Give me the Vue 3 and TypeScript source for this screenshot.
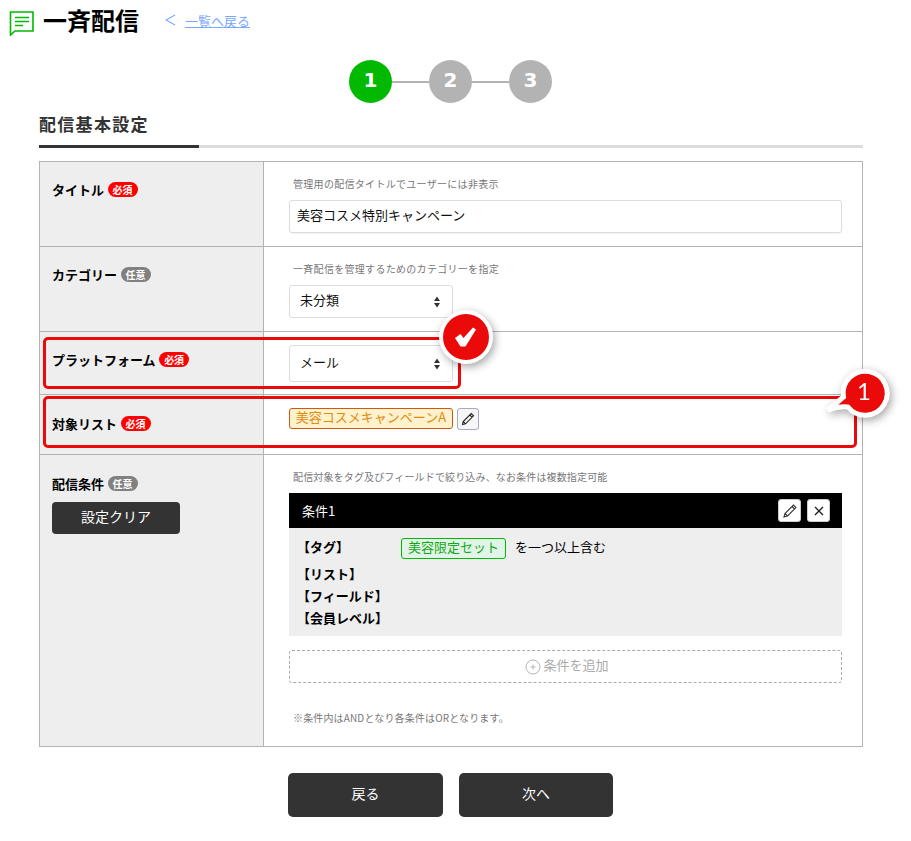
<script setup lang="ts">
const steps = [1, 2, 3]
</script>

<template>
  <div class="page">
    <header class="head">
      <svg class="head-icon" width="26" height="26" viewBox="0 0 26 26" fill="none" stroke="#00b900">
        <path d="M1.5 2h22.5v19H6l-4.500 4z" stroke-width="1.600" fill="#fff" />
        <path d="M6 7.500h14M6 11.500h14M6 15.500h8" stroke-width="1.500" />
      </svg>
      <h1>一斉配信</h1>
      <svg class="chev" width="11" height="12" viewBox="0 0 11 12" fill="none" stroke="#7aa7ff" stroke-width="1.100">
        <path d="M10 1 1 6l9 5" />
      </svg>
      <a class="back">一覧へ戻る</a>
    </header>

    <div class="steps">
      <template v-for="s in steps" :key="s">
        <span v-if="s > 1" class="step-line"></span>
        <span class="step" :class="{ on: s === 1 }">{{ s }}</span>
      </template>
    </div>

    <h2 class="section">配信基本設定</h2>

    <div class="form">
      <div class="row r1">
        <div class="lab"><b>タイトル</b><i class="req">必須</i></div>
        <div class="val">
          <p class="hint">管理用の配信タイトルでユーザーには非表示</p>
          <div class="input">美容コスメ特別キャンペーン</div>
        </div>
      </div>
      <div class="row r2">
        <div class="lab"><b>カテゴリー</b><i class="opt">任意</i></div>
        <div class="val">
          <p class="hint">一斉配信を管理するためのカテゴリーを指定</p>
          <div class="select">未分類
            <svg class="updown" width="6" height="12" viewBox="0 0 6 12" fill="#333"><path d="M3 0.500 6 5H0zM3 11.500 0 7h6z" /></svg>
          </div>
        </div>
      </div>
      <div class="row r3">
        <div class="lab"><b>プラットフォーム</b><i class="req">必須</i></div>
        <div class="val">
          <div class="select tall">メール
            <svg class="updown" width="6" height="12" viewBox="0 0 6 12" fill="#333"><path d="M3 0.500 6 5H0zM3 11.500 0 7h6z" /></svg>
          </div>
        </div>
      </div>
      <div class="row r4">
        <div class="lab"><b>対象リスト</b><i class="req">必須</i></div>
        <div class="val list-val">
          <span class="list-tag">美容コスメキャンペーンA</span>
          <button class="edit">
            <svg width="14" height="14" viewBox="0 0 14 14" fill="none" stroke="#222" stroke-width="1.100">
              <path d="M1.500 12.500l.7-3L10.200 1.500l2.300 2.300-8 8zM8.800 3l2.200 2.200M2.200 9.500l2.300 2.300" />
            </svg>
          </button>
        </div>
      </div>
      <div class="row r5">
        <div class="lab">
          <div><b>配信条件</b><i class="opt">任意</i></div>
          <button class="clear">設定クリア</button>
        </div>
        <div class="val">
          <p class="hint tight">配信対象をタグ及びフィールドで絞り込み、なお条件は複数指定可能</p>
          <div class="cond">
            <div class="cond-head">
              <span>条件1</span>
              <div class="cond-tools">
                <button class="tool">
                  <svg width="16" height="16" viewBox="0 0 16 16" fill="none" stroke="#333" stroke-width="1.100">
                    <path d="M2 14l1-3.500L11.500 2 14 4.500 5.500 13zM10 3.500 12.500 6M3 10.500l2.500 2.500" />
                  </svg>
                </button>
                <button class="tool">
                  <svg width="10" height="10" viewBox="0 0 10 10" stroke="#222" stroke-width="1.400">
                    <path d="M1 1l8 8M9 1l-8 8" />
                  </svg>
                </button>
              </div>
            </div>
            <div class="cond-body">
              <div class="cond-line first">
                <b class="cond-key">【タグ】</b>
                <span class="green-tag">美容限定セット</span>
                <span class="cond-text">を一つ以上含む</span>
              </div>
              <div class="cond-line"><b class="cond-key">【リスト】</b></div>
              <div class="cond-line"><b class="cond-key">【フィールド】</b></div>
              <div class="cond-line"><b class="cond-key">【会員レベル】</b></div>
            </div>
          </div>
          <div class="add">
            <svg class="add-icon" width="16" height="16" viewBox="0 0 16 16" fill="none" stroke="#b5b5b5">
              <circle cx="8" cy="8" r="7" />
              <path d="M8 5.500v5M5.500 8h5" />
            </svg>
            <span>条件を追加</span>
          </div>
          <p class="note">※条件内はANDとなり各条件はORとなります。</p>
        </div>
      </div>
    </div>

    <div class="actions">
      <button class="act">戻る</button>
      <button class="act second">次へ</button>
    </div>

    <div class="mark box1"></div>
    <div class="mark box2"></div>

    <svg class="badge check" width="70" height="70" viewBox="0 0 70 70">
      <circle cx="35" cy="35" r="25" fill="#ea0a0a" stroke="#fff" stroke-width="4" />
      <path d="M24 36 29.500 32l3 4L42 25.500l3 2L34.500 44.500h-5z" fill="#fff" />
    </svg>
    <svg class="badge pin" width="90" height="74" viewBox="0 0 90 74">
      <path d="M17 47 32.500 34A22 22 0 1 1 37 44Q28 43 17 47z" fill="#ea0a0a" stroke="#fff" stroke-width="5" />
      <text x="53" y="37" text-anchor="middle" class="pin-num">1</text>
    </svg>
  </div>
</template>

<style scoped>
.page {
  position: relative;
  width: 911px;
  height: 841px;
  box-sizing: border-box;
  padding: 0 48px 0 39px;
  background: #fff;
  color: #111;
  font-family: "Noto Sans CJK JP", "Liberation Sans", sans-serif;
  font-size: 13px;
  overflow: hidden;
}
button { font-family: inherit; cursor: pointer; }
p { margin: 0; }
i { font-style: normal; }

.head {
  display: flex;
  align-items: center;
  height: 40px;
  margin-left: -30px;
}
.head-icon { margin: 5px 8px 0 0; }
h1 {
  margin: 0 26px 0 0;
  font-size: 24px;
  line-height: 40px;
  font-weight: 700;
  color: #000;
}
.chev { margin-right: 9px; }
.back {
  color: #7aa7ff;
  text-decoration: underline;
  font-size: 13px;
}

.steps {
  display: flex;
  align-items: center;
  justify-content: center;
  height: 43px;
  margin: 20px 1px 0 0;
}
.step {
  width: 43px;
  height: 43px;
  border-radius: 50%;
  background: #b3b3b3;
  color: #fff;
  font: 700 20px/41px "DejaVu Sans", sans-serif;
  text-align: center;
}
.step.on { background: #00b900; }
.step-line {
  width: 37px;
  height: 2px;
  background: #b3b3b3;
}

.section {
  margin: 9px 0 0;
  height: 33px;
  font-size: 17px;
  line-height: 24px;
  font-weight: 700;
  letter-spacing: 1.300px;
  color: #333;
  border-bottom: 3px solid #dcdcdc;
  position: relative;
}
.section::after {
  content: "";
  position: absolute;
  left: 0;
  bottom: -3px;
  width: 160px;
  height: 3px;
  background: #333;
}

.form {
  margin-top: 13px;
  border: 1px solid #b3b3b3;
  border-bottom: 0;
}
.row {
  display: grid;
  grid-template-columns: 224px 1fr;
  border-bottom: 1px solid #b3b3b3;
}
.r1, .r2 { height: 84px; }
.r3 { height: 62px; }
.r4 { height: 59px; }
.r5 { height: 291px; }
.lab {
  background: #eee;
  border-right: 1px solid #b3b3b3;
  padding: 19px 0 0 12px;
  line-height: 18px;
}
.r4 .lab, .r5 .lab { padding-top: 20px; }
.lab b { font-size: 13px; font-weight: 700; color: #000; }
.req, .opt {
  display: inline-block;
  width: 30px;
  height: 15px;
  margin-left: 3.500px;
  border-radius: 8px;
  color: #fff;
  font-size: 10px;
  font-weight: 700;
  line-height: 15px;
  text-align: center;
  vertical-align: 1px;
}
.req { background: #f00; }
.opt { background: #808080; }

.val { padding: 15px 20px 0 25px; }
.hint {
  padding-left: 4px;
  font-size: 10px;
  line-height: 14px;
  letter-spacing: 0.300px;
  color: #777;
}
.hint.tight { letter-spacing: 0.150px; }
.input {
  margin-top: 9px;
  height: 33px;
  box-sizing: border-box;
  border: 1px solid #ddd;
  border-radius: 3px;
  padding-left: 7px;
  line-height: 28px;
  box-shadow: 0 1px 1px rgba(0, 0, 0, 0.06);
}
.select {
  position: relative;
  margin-top: 9px;
  width: 164px;
  height: 33px;
  box-sizing: border-box;
  border: 1px solid #ddd;
  border-radius: 3px;
  padding-left: 10px;
  line-height: 28px;
}
.select.tall {
  margin-top: -2px;
  height: 37px;
  line-height: 31px;
}
.updown {
  position: absolute;
  right: 12px;
  top: 50%;
  margin-top: -6px;
}
.list-val {
  display: flex;
  align-items: flex-start;
  gap: 4px;
  padding-top: 13px;
}
.list-tag {
  box-sizing: border-box;
  width: 164px;
  height: 21px;
  border: 1px solid #d2570f;
  border-radius: 3px;
  background: #fff2cc;
  color: #e08a10;
  line-height: 16px;
  text-align: center;
  white-space: nowrap;
}
.edit {
  width: 22px;
  height: 22px;
  padding: 0;
  display: flex;
  align-items: center;
  justify-content: center;
  border: 1px solid #a6a9c0;
  border-radius: 3px;
  background: #f6f6f6;
}

.clear {
  display: block;
  width: 128px;
  height: 32px;
  margin-top: 9px;
  padding: 0 0 5px;
  border: 0;
  border-radius: 4px;
  background: #333;
  color: #fff;
  font-size: 14px;
}

.cond { margin-top: 9px; }
.cond-head {
  display: flex;
  align-items: center;
  justify-content: space-between;
  height: 35px;
  padding: 0 12px 0 13px;
  background: #000;
  color: #fff;
}
.cond-tools { display: flex; gap: 6px; }
.tool {
  width: 23px;
  height: 23px;
  padding: 0;
  display: flex;
  align-items: center;
  justify-content: center;
  background: #fff;
  border: 1px solid #ccc;
  border-radius: 3px;
}
.cond-body {
  height: 108px;
  box-sizing: border-box;
  padding: 10px 0 0 8px;
  background: #eee;
}
.cond-line {
  display: flex;
  align-items: center;
  height: 22px;
}
.cond-line.first { height: 21px; margin-bottom: 5px; }
.cond-key {
  width: 104px;
  flex: none;
  padding-bottom: 4px;
  color: #000;
  font-weight: 700;
}
.green-tag {
  box-sizing: border-box;
  width: 105px;
  height: 21px;
  border: 1px solid #00b900;
  border-radius: 3px;
  background: #e0f5e8;
  color: #16a716;
  line-height: 15px;
  text-align: center;
}
.cond-text { margin: 0 0 4px 9px; color: #000; }
.add {
  display: flex;
  align-items: center;
  justify-content: center;
  gap: 2px;
  height: 33px;
  box-sizing: border-box;
  margin-top: 14px;
  padding: 0 0 5px 3px;
  border: 1px dashed #aaa;
  border-radius: 3px;
  color: #aaa;
}
.add-icon { margin-top: 5px; }
.note {
  margin-top: 28px;
  padding-left: 4px;
  font-size: 10px;
  line-height: 14px;
  letter-spacing: 0.150px;
  color: #777;
}

.actions {
  display: flex;
  gap: 16px;
  margin-top: 26px;
  padding-left: 249px;
}
.act {
  width: 155px;
  height: 44px;
  padding: 0 0 4px;
  border: 0;
  border-radius: 5px;
  background: #333;
  color: #fff;
  font-size: 14px;
}
.act.second { width: 154px; }

.mark {
  position: absolute;
  box-sizing: border-box;
  border: 3px solid #ea0a0a;
  border-radius: 5px;
}
.box1 { left: 43px; top: 337px; width: 418px; height: 52px; }
.box2 { left: 43px; top: 396px; width: 814px; height: 52px; }
.badge {
  position: absolute;
  overflow: visible;
  filter: drop-shadow(2px 3px 4px rgba(0, 0, 0, 0.35));
}
.check { left: 431px; top: 302px; }
.pin { left: 811px; top: 363px; }
.pin-num {
  font: 400 24px "Lato", sans-serif;
  fill: #fff;
}
</style>
